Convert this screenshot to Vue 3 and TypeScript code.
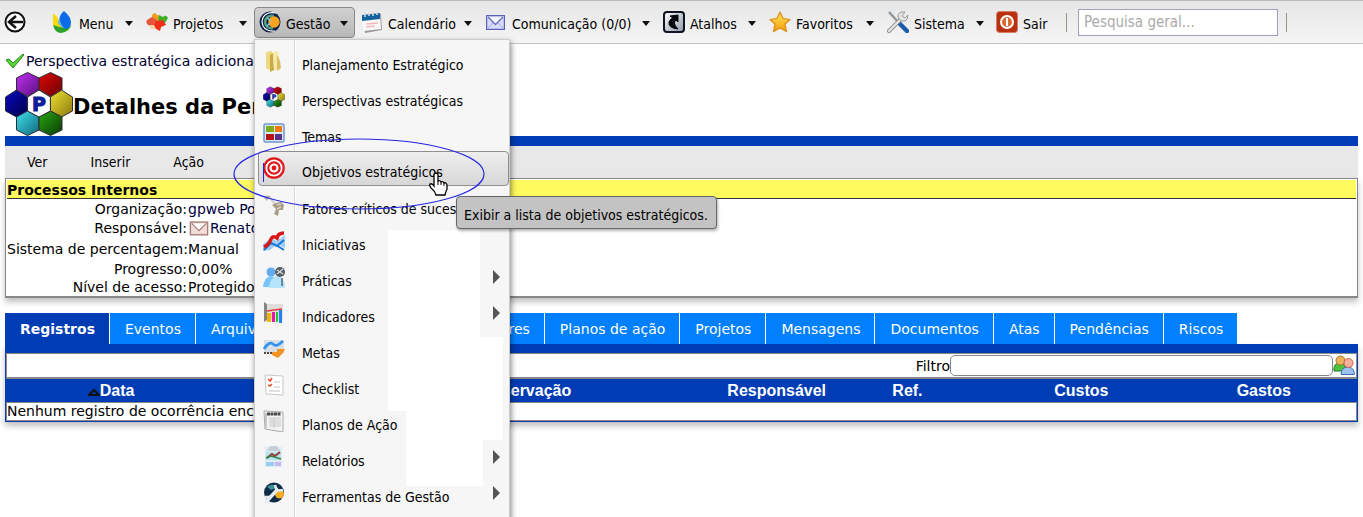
<script setup lang="ts">
import { ref } from 'vue'

interface ToolItem { label: string; icon: string; arrow: boolean; cls: string }
interface MenuItem { label: string; icon: string; sub?: boolean; active?: boolean }

const before: ToolItem[] = [
  { label: 'Menu', icon: 'menu', arrow: true, cls: 'w-menu' },
  { label: 'Projetos', icon: 'puzzle', arrow: true, cls: 'w-proj' },
]
const after: ToolItem[] = [
  { label: 'Calendário', icon: 'calendar', arrow: true, cls: 'w-cal' },
  { label: 'Comunicação (0/0)', icon: 'mail', arrow: true, cls: 'w-com' },
  { label: 'Atalhos', icon: 'shortcut', arrow: true, cls: 'w-ata' },
  { label: 'Favoritos', icon: 'star', arrow: true, cls: 'w-fav' },
  { label: 'Sistema', icon: 'tools', arrow: true, cls: 'w-sis' },
  { label: 'Sair', icon: 'power', arrow: false, cls: 'w-sair' },
]
const menu: MenuItem[] = [
  { label: 'Planejamento Estratégico', icon: 'folder' },
  { label: 'Perspectivas estratégicas', icon: 'hex' },
  { label: 'Temas', icon: 'themes' },
  { label: 'Objetivos estratégicos', icon: 'target', active: true },
  { label: 'Fatores críticos de sucesso', icon: 'keys' },
  { label: 'Iniciativas', icon: 'initiative' },
  { label: 'Práticas', icon: 'practice', sub: true },
  { label: 'Indicadores', icon: 'chart', sub: true },
  { label: 'Metas', icon: 'goal' },
  { label: 'Checklist', icon: 'check' },
  { label: 'Planos de Ação', icon: 'plan' },
  { label: 'Relatórios', icon: 'report', sub: true },
  { label: 'Ferramentas de Gestão', icon: 'mgmt', sub: true },
]
const tabs = ['Registros', 'Eventos', 'Arquivos', 'Indicadores', 'Planos de ação', 'Projetos', 'Mensagens', 'Documentos', 'Atas', 'Pendências', 'Riscos']
const current = ref('Registros')
const search = ref('')
const filter = ref('')
</script>

<template>
  <div class="page">
    <svg class="defs" aria-hidden="true">
      <defs>
        <linearGradient id="gPurple" x1="0" y1="0" x2="1" y2="1"><stop offset="0" stop-color="#c030f0" /><stop offset="1" stop-color="#5a1080" /></linearGradient>
        <linearGradient id="gRed" x1="0" y1="0" x2="1" y2="1"><stop offset="0" stop-color="#e00808" /><stop offset="1" stop-color="#6a0000" /></linearGradient>
        <linearGradient id="gYellow" x1="0" y1="0" x2="1" y2="1"><stop offset="0" stop-color="#f0e030" /><stop offset="1" stop-color="#8a7a10" /></linearGradient>
        <linearGradient id="gGreen" x1="0" y1="0" x2="1" y2="1"><stop offset="0" stop-color="#28a810" /><stop offset="1" stop-color="#0a3a04" /></linearGradient>
        <linearGradient id="gCyan" x1="0" y1="0" x2="1" y2="1"><stop offset="0" stop-color="#40e0f0" /><stop offset="1" stop-color="#106878" /></linearGradient>
        <linearGradient id="gNavy" x1="0" y1="0" x2="1" y2="1"><stop offset="0" stop-color="#0808c0" /><stop offset="1" stop-color="#000048" /></linearGradient>
        <linearGradient id="gSteel" x1="0" y1="0" x2="1" y2="1"><stop offset="0" stop-color="#ffffff" /><stop offset="1" stop-color="#8f9aa8" /></linearGradient>
        <linearGradient id="gGold" x1="0" y1="0" x2="0" y2="1"><stop offset="0" stop-color="#ffe860" /><stop offset="1" stop-color="#f59a08" /></linearGradient>
      </defs>
      <symbol id="i-menu" viewBox="0 0 22 22">
        <path d="M1 3Q5 4 7 10Q9 15 14 17Q10 21 7 20Q1 18 1 11Z" fill="#ffd800" />
        <path d="M1 14Q6 16 13 17Q19 17 20 12Q18 21 9 22Q3 22 1 14Z" fill="#2da32d" />
        <path d="M12 0Q19 6 19 11Q19 17 14 18Q7 16 7 9Q8 3 12 0Z" fill="#0c6be8" />
        <path d="M8 6Q7 11 12 17Q7 15 6 11Z" fill="#56b8ff" />
      </symbol>
      <symbol id="i-puzzle" viewBox="0 0 22 22">
        <path d="M6 4Q9 0 11 4L15 5L13 10L6 9Z" fill="#f0a020" />
        <path d="M13 4L17 6Q20 3 22 7L19 12L12 11Z" fill="#3fae28" />
        <path d="M1 9L6 6L11 9L11 14L4 15Q-1 13 1 9Z" fill="#e7553a" />
        <path d="M10 10L17 9L20 14L15 16L14 20L10 18L7 16Z" fill="#ef2f18" />
        <path d="M3 14L8 14L10 18L5 18Z" fill="#fbd0a8" />
      </symbol>
      <symbol id="i-gestao" viewBox="0 0 22 22">
        <circle cx="11" cy="11" r="10.500" fill="#0e2148" />
        <path d="M17 2Q4 0 3 11Q4 21 16 20" fill="none" stroke="#fff" stroke-width="1.200" />
        <path d="M15 5Q7 4 6 11Q7 18 14 17" fill="none" stroke="#4f9f80" stroke-width="2.500" />
        <circle cx="15" cy="11" r="5.700" fill="#f9a41c" />
        <path d="M8 7L12 10M8 15L11 12" stroke="#86d0e8" stroke-width="1.300" />
      </symbol>
      <symbol id="i-calendar" viewBox="0 0 22 22">
        <path d="M2 5L20 3L21 19L4 22Z" fill="#9a9a9a" /><path d="M1 5L19 3L20 18L3 20Z" fill="#f8f8f8" />
        <path d="M1 4L19 2L19 8L1 10Z" fill="#13649e" />
        <path d="M4 1V6M8 1V5M12 0V5M16 0V4" stroke="#ddd" stroke-width="1.500" />
        <path d="M5 13L17 12M5 16L14 15" stroke="#f4b8b8" stroke-width="1.500" />
      </symbol>
      <symbol id="i-mail" viewBox="0 0 22 22">
        <rect x="1.500" y="4.500" width="18" height="14" fill="#b9bff4" stroke="#5b62b4" />
        <rect x="3" y="6" width="15" height="11" fill="#d9dcfc" /><path d="M3 17L8 12M18 17L13 12" stroke="#a5aaf0" />
        <path d="M3 6L10.500 13.500L18 6" fill="#f4f5ff" stroke="#6a70c0" stroke-width="1.400" />
      </symbol>
      <symbol id="i-mailbrown" viewBox="0 0 22 22">
        <rect x="1.500" y="4.500" width="19" height="14" fill="#efdcd8" stroke="#a67c74" stroke-width="1.500" />
        <path d="M3 6L11 14L19 6" fill="#fff" stroke="#a67c74" stroke-width="1.300" />
      </symbol>
      <symbol id="i-shortcut" viewBox="0 0 22 22">
        <rect x="1" y="1" width="20" height="20" rx="3" fill="url(#gSteel)" stroke="#111521" stroke-width="2" />
        <path d="M7 5L15 4L15 11L13 9Q9 12 15 18Q5 17 6 11Q7 8 10 7Z" fill="#05070c" stroke="#05070c" />
      </symbol>
      <symbol id="i-star" viewBox="0 0 22 22">
        <path d="M11 1L14 7.500L21 8.500L16 13L17.500 20.500L11 17L4.500 20.500L6 13L1 8.500L8 7.500Z" fill="url(#gGold)" stroke="#dd8a10" stroke-width="1.200" stroke-linejoin="round" />
      </symbol>
      <symbol id="i-tools" viewBox="0 0 22 22">
        <path d="M2 1L12 12" stroke="#8f969c" stroke-width="2.500" /><path d="M12 12L20 20" stroke="#1d5ca8" stroke-width="4.500" stroke-linecap="round" />
        <path d="M2 20L14 8" stroke="#8c8c8c" stroke-width="4" stroke-linecap="round" /><path d="M2 20L14 8" stroke="#e6e6e6" stroke-width="2.400" stroke-linecap="round" />
        <path d="M18 1Q11 0 11 6Q13 11 18 10Q21 9 21 4L18 7L15 5Z" fill="#e4e4e4" stroke="#8c8c8c" stroke-width=".8" />
      </symbol>
      <symbol id="i-power" viewBox="0 0 22 22">
        <rect x=".5" y=".5" width="21" height="21" rx="3" fill="#b83212" stroke="#d67c68" />
        <circle cx="11" cy="11" r="6" fill="#d96a32" stroke="#fff" stroke-width="2" /><path d="M11 7V15" stroke="#fff" stroke-width="2" />
      </symbol>
      <symbol id="i-folder" viewBox="0 0 22 22">
        <path d="M3 2L9 1L10 18L6 20L3 18Z" fill="#ecd980" /><path d="M7 5L10 3L11 20L7 22Z" fill="#c7a947" />
        <path d="M10 2L15 1L17 18L11 21Z" fill="#f6e9a4" /><path d="M14 5L17 11L18 18L14 21Z" fill="#d9be60" />
      </symbol>
      <symbol id="i-hex" viewBox="0 0 68 64">
        <g stroke="#2c2c38" stroke-width="1">
          <path d="M22.500 .5L34 6V18L22.500 24.500L11.500 18V6Z" fill="url(#gPurple)" /><path d="M45.500 .5L57 6V18L45.500 24.500L34 18V6Z" fill="url(#gRed)" />
          <path d="M11.500 18L22.600 25V39L11.500 45L.5 39V25Z" fill="url(#gNavy)" /><path d="M56.500 18L67.500 25V39L56.500 45L45.400 39V25Z" fill="url(#gYellow)" />
          <path d="M22.500 39L34 45V58L22.500 63.500L11.500 58V45Z" fill="url(#gCyan)" /><path d="M45.500 39L57 45V58L45.500 63.500L34 58V45Z" fill="url(#gGreen)" />
          <path d="M34 18L45.400 25V39L34 45L22.600 39V25Z" fill="#fff" />
        </g>
        <text x="34" y="39" text-anchor="middle" font-family="DejaVu Sans" font-size="19" font-weight="700" fill="#0c1ca8" stroke="#0c1c80">P</text>
      </symbol>
      <symbol id="i-themes" viewBox="0 0 22 22">
        <rect x="1" y="2" width="20" height="18" rx="1.500" fill="#d9e8f8" stroke="#6f98c8" stroke-width="1.500" />
        <rect x="3" y="4" width="8" height="6" fill="#7db018" /><rect x="12" y="4" width="7" height="6" fill="#fa780a" />
        <rect x="3" y="12" width="8" height="6" fill="#b81414" /><rect x="12" y="12" width="7" height="6" fill="#5c3088" />
      </symbol>
      <symbol id="i-target" viewBox="0 0 22 22">
        <circle cx="11" cy="11" r="9.700" fill="#fff" stroke="#e01818" stroke-width="2.200" /><circle cx="11" cy="11" r="5.700" fill="none" stroke="#e01818" stroke-width="2.200" />
        <circle cx="11" cy="11" r="2.400" fill="#e01818" />
      </symbol>
      <symbol id="i-keys" viewBox="0 0 22 22">
        <path d="M1 4Q4 -1 8 3L5 5L4 7Z" fill="#bbb5a8" /><path d="M7 4L13 11" stroke="#d5d0c6" stroke-width="2" />
        <path d="M9 11L13 9L18 8L21 11L20 16L16 16L15 22L11 20L13 15Z" fill="#a79c86" /><path d="M14 11L18 10M14 15L18 13" stroke="#d5cfc0" stroke-width="1.500" />
      </symbol>
      <symbol id="i-initiative" viewBox="0 0 22 22">
        <path d="M0 14L8 8L14 11L22 5V18L14 14L7 20L0 21Z" fill="#9fcdf4" />
        <path d="M1 20L8 13L14 16L21 10M13 15L21 20" fill="none" stroke="#1478d8" stroke-width="2" />
        <path d="M1 17Q6 15 8 9Q10 5 14 8Q15 3 21 3" fill="none" stroke="#d81818" stroke-width="3.500" />
      </symbol>
      <symbol id="i-practice" viewBox="0 0 22 22">
        <circle cx="8" cy="6" r="4.500" fill="#62acf0" /><path d="M0 21Q1 11 8 10Q14 11 15 21Z" fill="#78c5fa" />
        <path d="M6 22Q7 10 16 10Q22 12 22 22Z" fill="#b6e4fc" /><circle cx="17" cy="6" r="5" fill="#555f68" />
        <path d="M14 4L20 8M20 3L14 8" stroke="#d9d9d9" stroke-width="1.300" /><path d="M19 12V20" stroke="#6e8796" stroke-width="2" />
      </symbol>
      <symbol id="i-chart" viewBox="0 0 22 22">
        <path d="M1 0V20L4 18V2Z" fill="#858585" /><path d="M4 2H20V18H4Z" fill="#e0dddb" /><path d="M4 9L11 8L19 7" stroke="#e04040" stroke-width="1.500" fill="none" />
        <path d="M4 11H8V20H4Z" fill="#f5b400" /><path d="M9 10H12V20H9Z" fill="#e418ac" /><path d="M13 10H15V20H13Z" fill="#20c820" /><path d="M16 8H19V21H16Z" fill="#2080f4" />
      </symbol>
      <symbol id="i-goal" viewBox="0 0 22 22">
        <rect x="1" y="2" width="20" height="13" fill="#d8dfe5" /><path d="M1 11Q6 3 10 6Q13 10 20 3" fill="none" stroke="#3394ee" stroke-width="2.800" />
        <path d="M1 15H11" stroke="#554840" stroke-width="2" stroke-dasharray="2 1" /><path d="M9 14H14V11H22L20 15L15 20L9 17Z" fill="#f49422" />
      </symbol>
      <symbol id="i-check" viewBox="0 0 22 22">
        <path d="M2 1L20 2V21L3 20Z" fill="#fff" stroke="#c8c8c8" /><path d="M5 5L7 7L9 4M5 11L7 12L9 10" stroke="#f05530" stroke-width="1.700" fill="none" />
        <path d="M11 8H17M11 13H17M6 17H17" stroke="#bfc3c6" stroke-width="1.200" />
      </symbol>
      <symbol id="i-plan" viewBox="0 0 22 22">
        <path d="M1 1L20 2V22L2 19Z" fill="#f4f4f4" stroke="#aaa" /><path d="M4 4H18" stroke="#484848" stroke-width="3" stroke-dasharray="3 .5" />
        <path d="M3 3V18" stroke="#c8c8c8" stroke-width="2" /><path d="M11 8V18M6 8H18M6 10H18M6 12H18M6 14H18M6 16H18" stroke="#c8c8c8" />
      </symbol>
      <symbol id="i-report" viewBox="0 0 22 22">
        <path d="M2 1H19V21H2Z" fill="#dcecf2" /><path d="M7 0H14L17 5H4Z" fill="#c9ced6" /><path d="M3 6H18V14H3Z" fill="#b9e3ea" />
        <path d="M4 12L9 8L12 10L17 6" stroke="#983838" stroke-width="2" fill="none" /><path d="M3 12L8 10L18 13" stroke="#3c8050" stroke-width="1.500" fill="none" />
        <path d="M3 16H11V20H3Z" fill="#98cdf2" /><path d="M12 16H18V20H12Z" fill="#c9b6f3" />
      </symbol>
      <symbol id="i-mgmt" viewBox="0 0 22 22">
        <circle cx="11" cy="10.500" r="10" fill="#102b48" /><path d="M4 5Q10 0 14 6L8 8Z" fill="#3b8f96" /><circle cx="16.500" cy="12" r="4.500" fill="#f3ab20" />
        <path d="M2 21L14 8" stroke="#e8edf2" stroke-width="3.500" /><path d="M12 3Q13 10 20 8M2 15L8 15" stroke="#e8edf2" stroke-width="2.500" fill="none" />
      </symbol>
      <symbol id="i-users" viewBox="0 0 22 22">
        <path d="M1 16Q0 8 7 8Q13 8 13 16Z" fill="#4fc03c" stroke="#257a28" /><circle cx="7.500" cy="5.500" r="4.500" fill="#eab25a" stroke="#ab7528" />
        <path d="M8 19.500Q8 12 15 12Q21 12 21.500 19.500Z" fill="#9cc2f2" stroke="#3b70b8" /><circle cx="15.500" cy="8" r="4.500" fill="#f6b09a" stroke="#c65f58" />
      </symbol>
    </svg>

    <header class="toolbar">
      <button class="back" type="button" aria-label="Voltar">
        <svg viewBox="0 0 22 22" width="22" height="22"><circle cx="11" cy="11" r="9.500" fill="#fff" stroke="#111" stroke-width="2" /><path d="M19 11H5M12 5L5 11L12 17" fill="none" stroke="#111" stroke-width="2.500" /></svg>
      </button>
      <button v-for="t in before" :key="t.label" type="button" class="tool" :class="t.cls">
        <svg class="ico"><use :href="'#i-' + t.icon" /></svg><span>{{ t.label }}</span><i v-if="t.arrow" class="caret" />
      </button>
      <div class="holder">
        <button type="button" class="tool pressed" aria-expanded="true">
          <svg class="ico"><use href="#i-gestao" /></svg><span>Gestão</span><i class="caret" />
        </button>
        <nav class="dropdown">
          <svg class="blank" viewBox="0 0 115 256" width="115" height="256"><path d="M0 0H92V107H115V210H95V256H18V181H0Z" fill="#fff" /></svg>
          <a v-for="m in menu" :key="m.label" href="#" class="entry" :class="{ active: m.active }">
            <svg class="ico"><use :href="'#i-' + m.icon" /></svg><span>{{ m.label }}</span><i v-if="m.sub" class="side" />
          </a>
          <svg class="ring" viewBox="0 0 252 72" width="252" height="72"><ellipse cx="126" cy="36" rx="125" ry="35" fill="none" stroke="#2626e0" stroke-width="1.200" /><path d="M30.500 25V44" stroke="#2626e0" /></svg>
          <div class="tip" role="tooltip">Exibir a lista de objetivos estratégicos.</div>
          <svg class="hand" viewBox="0 0 20 24" width="20" height="24"><path d="M6 13V3Q6 1 8 1Q10 1 10 3V9Q12 8 13 10Q15 9 16 11Q18 10 19 13V17Q18 19 17 23H8Q7 19 3 16Q1 13 2 12Q4 11 6 14Z" fill="#fff" stroke="#000" stroke-width="1.300" /><path d="M10 9V13M13 10V13M16 11V14" stroke="#000" /></svg>
        </nav>
      </div>
      <button v-for="t in after" :key="t.label" type="button" class="tool" :class="t.cls">
        <svg class="ico"><use :href="'#i-' + t.icon" /></svg><span>{{ t.label }}</span><i v-if="t.arrow" class="caret" />
      </button>
      <span class="sep" />
      <input v-model="search" class="search" type="text" placeholder="Pesquisa geral..." aria-label="Pesquisa geral">
      <span class="sep" />
    </header>

    <main>
      <p class="message">
        <svg viewBox="0 0 20 16" width="20" height="16"><path d="M1 7L4 6L8 10L18 1L19 2L8 15Z" fill="#5bd33c" stroke="#27861d" /></svg>
        <span>Perspectiva estratégica adicionada</span>
      </p>
      <div class="title">
        <svg width="68" height="64"><use href="#i-hex" /></svg>
        <h1>Detalhes da Perspectiva</h1>
      </div>
      <div class="bar" />
      <nav class="submenu"><a href="#">Ver</a><a href="#">Inserir</a><a href="#">Ação</a></nav>

      <section class="panel">
        <h2>Processos Internos</h2>
        <dl>
          <dt>Organização:</dt><dd class="link">gpweb Pos</dd>
          <dt>Responsável:</dt><dd class="link"><svg width="22" height="20"><use href="#i-mailbrown" /></svg>Renato</dd>
          <dt>Sistema de percentagem:</dt><dd>Manual</dd>
          <dt>Progresso:</dt><dd>0,00%</dd>
          <dt>Nível de acesso:</dt><dd>Protegido</dd>
        </dl>
      </section>

      <div class="tabs" role="tablist">
        <button v-for="t in tabs" :key="t" role="tab" type="button" :aria-selected="t === current" :class="{ on: t === current, wide: t === 'Indicadores' }" @click="current = t">{{ t }}</button>
      </div>
      <section class="records">
        <div class="filter">
          <label for="filtro">Filtro</label><input id="filtro" v-model="filter" type="text">
          <svg width="22" height="22"><use href="#i-users" /></svg>
        </div>
        <table>
          <thead>
            <tr>
              <th class="c1"><svg viewBox="0 0 12 8" width="12" height="8"><path d="M1 7L6 2L11 7Z" fill="#003cb4" stroke="#111" stroke-width="2" /></svg>Data</th>
              <th class="c2" /><th class="c3">Observação</th><th class="c4">Responsável</th><th class="c5">Ref.</th><th class="c6">Custos</th><th>Gastos</th>
            </tr>
          </thead>
          <tbody><tr><td colspan="7">Nenhum registro de ocorrência encontrado.</td></tr></tbody>
        </table>
      </section>
    </main>
  </div>
</template>

<style>
body { background: #fff; }
</style>

<style scoped>
* { box-sizing: border-box; }
.page { height: 100vh; overflow: hidden; color: #000; font: 14px/18px Verdana, "DejaVu Sans", sans-serif; }
.defs { position: absolute; width: 0; height: 0; }
button { font: inherit; color: inherit; border: 0; background: none; padding: 0; margin: 0; }
a { color: inherit; text-decoration: none; }
.toolbar { display: flex; align-items: center; height: 44px; padding-left: 4px; border-top: 1px solid #bbb; border-bottom: 1px solid #c4c4c4; background: linear-gradient(#e6e6e6, #f5f5f5); font: 14px/20px Tahoma, "DejaVu Sans Condensed", "Open Sans", sans-serif; white-space: nowrap; }
.back { display: flex; width: 44px; flex: none; }
.ico { width: 22px; height: 22px; flex: none; }
.tool { display: flex; align-items: center; flex: none; height: 31px; padding: 0 7px 0 4px; }
.tool span { margin-left: 5px; padding-top: 3px; }
.caret { margin: 2px 0 0 auto; border: 4px solid transparent; border-top: 5px solid #111; border-bottom: 0; }
.w-menu { width: 92px; }
.w-proj { width: 114px; padding-left: 6px; }
.holder { position: relative; flex: none; }
.pressed { width: 101px; border: 1px solid #888; border-radius: 4px; background: linear-gradient(#d0d0d0, #b9b9b9); padding-right: 6px; }
.w-cal { width: 124px; padding-left: 6px; }
.w-com { width: 178px; padding-left: 6px; }
.w-ata { width: 106px; padding-left: 6px; }
.w-fav { width: 118px; padding-left: 6px; }
.w-sis { width: 110px; padding-left: 6px; }
.w-sair { width: 68px; padding-left: 5px; }
.sep { flex: none; width: 1px; height: 19px; background: #98947c; margin-left: 8px; }
.w-sair + .sep { margin-left: 7px; margin-right: 4px; }
.search { flex: none; width: 200px; height: 27px; margin-left: 7px; border: 1px solid #a0a0bd; padding: 0 5px; background: #fff; font: inherit; font-size: 15px; color: #000; outline: none; }
.search::placeholder { color: #aaa; opacity: 1; }

.dropdown { position: absolute; z-index: 5; top: 32px; left: 0; width: 256px; height: 490px; padding: 3px 0 0 3px; border: 1px solid #ccc; background: linear-gradient(90deg, #f6f6f6 39px, #d9d9d9 39px, #d9d9d9 40px, #fff 40px, #fff 41px, #f6f6f6 41px); box-shadow: 1px 3px 6px rgba(0, 0, 0, .5); }
.entry { position: relative; display: flex; align-items: center; height: 36px; padding: 0 8px 0 5px; border: 1px solid transparent; }
.entry .ico { margin-left: -1px; }
.entry span { margin-left: 17px; padding-top: 8px; }
.entry.active { height: 35px; margin-bottom: 1px; border-color: #8f8f8f; border-radius: 4px; background: linear-gradient(#eee, #d7d7d7); }
.side { margin-left: auto; border: 7px solid transparent; border-left: 7px solid #555; border-right: 0; }
.blank { position: absolute; left: 133px; top: 190px; }
.ring { position: absolute; left: -22px; top: 98px; }
.tip { position: absolute; left: 201px; top: 156px; height: 33px; padding: 8px 8px 0 7px; border: 1px solid #666; border-radius: 4px; background: #c3c3c3; box-shadow: 1px 2px 3px rgba(0, 0, 0, .3); }
.hand { position: absolute; left: 173px; top: 132px; }

main { padding: 0 5px; }
.message { display: flex; align-items: center; height: 28px; margin: 0; padding-top: 6px; color: #000030; }
.message span { margin-left: 1px; }
.title { display: flex; align-items: center; height: 64px; }
.title h1 { margin: 6px 0 0; font-size: 21px; line-height: 26px; }
.bar { height: 10px; background: #003cb4; }
.submenu { display: flex; gap: 43px; height: 32px; padding-left: 22px; background: #e8e8e8; font: 14px/32px Tahoma, "DejaVu Sans Condensed", sans-serif; }
.panel { height: 120px; padding: 1px; border: 1px solid #888; border-bottom-width: 2px; box-shadow: 0 4px 6px rgba(0, 0, 0, .25); }
.panel h2 { margin: 0; padding: 1px 0 0; height: 19px; border-bottom: 1px solid #333; background: #fffa5e; font-size: 14px; line-height: 18px; }
dl { display: grid; grid-template-columns: 180px 1fr; grid-template-rows: 18px 19px 23px 18px 18px; column-gap: 1px; align-items: center; margin: 1px 0 0; white-space: nowrap; }
dt { text-align: right; }
dd { display: flex; align-items: center; margin: 0; }
.link { color: #000040; }
.tabs { display: flex; margin-top: 15px; height: 31px; }
.tabs button { flex: none; padding: 0 14px 0 15px; background: #0080ff; color: #fff; border-right: 1px solid #fff; }
.tabs button:last-child { border-right: 0; }
.tabs .on { background: #003cb4; font-weight: 700; }
.tabs .wide { width: 258px; text-align: right; }
.records { padding: 9px 1px 1px; background: #003cb4; box-shadow: 0 4px 6px rgba(0, 0, 0, .25); }
.filter { display: flex; align-items: center; justify-content: flex-end; height: 26px; border: 1px solid #888; border-bottom-width: 2px; background: #fff; padding-right: 1px; }
.filter input { width: 383px; height: 21px; border: 1px solid #888; border-radius: 5px; background: #fff; outline: none; }
table { width: 100%; table-layout: fixed; border-collapse: separate; border-spacing: 0; }
th { height: 23px; padding: 0; color: #fff; font: 700 16px/23px Arial, "Liberation Sans", sans-serif; }
td { height: 19px; padding: 0; border: 1px solid #888; background: #fff; line-height: 17px; }
.c1 { width: 16.300%; padding-right: 10px; }
.c2 { width: 7.400%; }
.c3 { width: 29.500%; }
.c4 { width: 7.700%; }
.c5 { width: 12.100%; padding-right: 6px; }
.c6 { width: 13.200%; }
</style>
